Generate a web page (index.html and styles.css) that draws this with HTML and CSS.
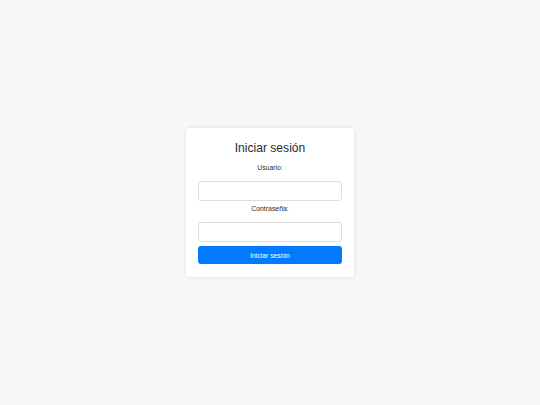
FILE: index.html
```html
<!DOCTYPE html>
<html lang="es">
<head>
<meta charset="utf-8">
<title>Iniciar sesión</title>
<link rel="stylesheet" href="styles.css">
</head>
<body>
<main class="page">
  <form class="card">
    <h2 class="title">Iniciar sesión</h2>
    <label class="label" for="user">Usuario:</label>
    <input class="field" id="user" type="text">
    <label class="label label-second" for="pass">Contraseña:</label>
    <input class="field" id="pass" type="password">
    <button class="btn" type="button">Iniciar sesión</button>
  </form>
</main>
</body>
</html>
```
FILE: styles.css
```css
html, body {
  margin: 0;
  padding: 0;
}
body {
  background: #f7f7f7;
  font-family: "Liberation Sans", Arial, sans-serif;
  color: #222;
}
.page {
  height: 405px;
  display: flex;
  align-items: center;
  justify-content: center;
}
.card {
  box-sizing: border-box;
  width: 168px;
  height: 149px;
  padding: 12px;
  background: #fff;
  border-radius: 4px;
  box-shadow: 0 0 4px rgba(0, 0, 0, 0.1);
  display: flex;
  flex-direction: column;
}
.title {
  margin: 1px 0 7px;
  font-size: 12.1px;
  line-height: 15px;
  font-weight: 400;
  text-align: center;
  color: #2a2a2a;
}
.label {
  display: block;
  font-size: 6.9px;
  line-height: 10px;
  text-align: center;
  color: #2a2a2a;
  margin-bottom: 8px;
}
.label-second {
  margin-top: 3px;
}
.field {
  box-sizing: border-box;
  width: 100%;
  height: 20px;
  margin: 0;
  border: 1px solid #ddd;
  border-radius: 3px;
  background: #fff;
  padding: 0 4px;
}
.btn {
  box-sizing: border-box;
  width: 100%;
  height: 18px;
  margin-top: 4px;
  border: none;
  border-radius: 3px;
  background: #007bff;
  color: #fff;
  font-family: "Liberation Sans", Arial, sans-serif;
  font-size: 6.8px;
  padding: 0;
}
```
